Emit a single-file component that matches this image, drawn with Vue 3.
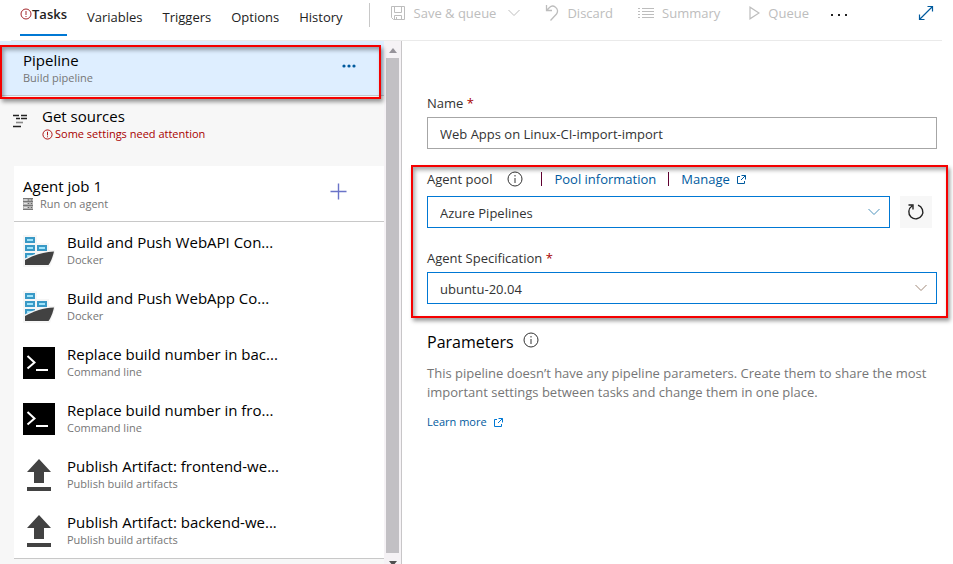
<script setup>
import { ref } from 'vue'

const tabs = ['Variables', 'Triggers', 'Options', 'History']
const tasks = [
  { icon: 'docker', title: 'Build and Push WebAPI Con...', kind: 'Docker' },
  { icon: 'docker', title: 'Build and Push WebApp Co...', kind: 'Docker' },
  { icon: 'cmd', title: 'Replace build number in bac...', kind: 'Command line' },
  { icon: 'cmd', title: 'Replace build number in fro...', kind: 'Command line' },
  { icon: 'publish', title: 'Publish Artifact: frontend-we...', kind: 'Publish build artifacts' },
  { icon: 'publish', title: 'Publish Artifact: backend-we...', kind: 'Publish build artifacts' },
]
const name = ref('Web Apps on Linux-CI-import-import')
const pool = ref('Azure Pipelines')
const spec = ref('ubuntu-20.04')
</script>

<template>
  <div class="page">
    <header class="topbar">
      <nav class="tabs">
        <a href="#" class="tab active">
          <svg width="12" height="12" viewBox="0 0 12 12" fill="none" stroke="#a4262c"><circle cx="6" cy="6" r="5" /><path d="M6 3v4M6 8v1" /></svg>
          <span>Tasks</span>
        </a>
        <a v-for="t in tabs" :key="t" href="#" class="tab">{{ t }}</a>
      </nav>
      <div class="toolbar">
        <button class="tool save" disabled>
          <svg width="16" height="16" viewBox="0 0 16 16" fill="none" stroke="currentColor"><path d="M1.500 1.500h13v13h-11l-2-2zM4.500 1.500v6h7v-6M4.500 14.500v-4h7v4M6.500 12v2" /></svg>
          <span>Save &amp; queue</span>
          <svg class="chevron" width="12" height="8" viewBox="0 0 12 8" fill="none" stroke="currentColor"><path d="M.5 1l5.500 5.500L11.500 1" /></svg>
        </button>
        <button class="tool" disabled>
          <svg width="14" height="16" viewBox="0 0 14 16" fill="none" stroke="currentColor" stroke-width="1.300"><path d="M1.500 0v5.500H7M1.500 5.500L4.500 2.500C6 1 8.500.7 10.500 2.200C13 4 13 7 11.500 9L5.500 15.500" /></svg>
          <span>Discard</span>
        </button>
        <button class="tool" disabled>
          <svg width="16" height="12" viewBox="0 0 16 12" fill="none" stroke="currentColor"><path d="M0 1.500h2M4 1.500h12M0 4.500h2M4 4.500h12M0 7.500h2M4 7.500h12M0 10.500h2M4 10.500h12" /></svg>
          <span>Summary</span>
        </button>
        <button class="tool queue" disabled>
          <svg width="11" height="14" viewBox="0 0 11 14" fill="none" stroke="currentColor" stroke-width="1.200"><path d="M1 1.200v11.600L10 7z" /></svg>
          <span>Queue</span>
        </button>
        <button class="icon-btn more" aria-label="More actions">
          <svg width="18" height="4" viewBox="0 0 18 4" fill="#222"><path d="M1 1h2v2H1zM8 1h2v2H8zM15 1h2v2h-2z" /></svg>
        </button>
      </div>
      <button class="icon-btn expand" aria-label="Full screen">
        <svg width="16" height="16" viewBox="0 0 16 16" fill="none" stroke="#005a9e" stroke-width="1.200"><path d="M1.500 14.500l13-13M9.500 1.500h5v5M1.500 9.500v5h5" /></svg>
      </button>
    </header>

    <div class="body">
      <aside class="side">
        <div class="list">
          <div class="pipeline">
            <div>
              <div class="title">Pipeline</div>
              <div class="sub">Build pipeline</div>
            </div>
            <button class="icon-btn" aria-label="Pipeline options">
              <svg width="14" height="4" viewBox="0 0 14 4" fill="#005a9e"><circle cx="2" cy="2" r="1.600" /><circle cx="7" cy="2" r="1.600" /><circle cx="12" cy="2" r="1.600" /></svg>
            </button>
            <div class="marker"></div>
          </div>
          <div class="sources">
            <svg width="15" height="14" viewBox="0 0 15 14" fill="none" stroke="#222"><path d="M0 1.500h6M8 1.500h6M3 4.500h4M8 4.500h6M0 12.500h8" stroke-width="1.300" /><path d="M3 8.500h7" stroke="#888" stroke-width="1.600" /></svg>
            <div>
              <div class="title">Get sources</div>
              <div class="sub warn">
                <svg width="11" height="11" viewBox="0 0 12 12" fill="none" stroke="#a80000"><circle cx="6" cy="6" r="5" /><path d="M6 3v4M6 8v1" /></svg>
                Some settings need attention
              </div>
            </div>
          </div>
          <section class="job">
            <div class="job-head">
              <div>
                <div class="title">Agent job 1</div>
                <div class="sub agent">
                  <svg width="10" height="12" viewBox="0 0 10 12"><path d="M0 0h10v12H0z" fill="#b4b4b4" /><path d="M0 .5h10M0 3.500h10M0 7.500h10M0 11.500h10" stroke="#777" /><path d="M1 2h3M1 5.500h3M1 9.500h3" stroke="#e4e4e4" /><path d="M5 2h1M8 2h1M5 5.500h1M8 5.500h1M5 9.500h1M8 9.500h1" stroke="#666" /></svg>
                  Run on agent
                </div>
              </div>
              <button class="icon-btn add" aria-label="Add a task">
                <svg width="17" height="17" viewBox="0 0 17 17" fill="none" stroke="#6a73c8" stroke-width="1.400"><path d="M8.500 .5v16M.5 8.500h16" /></svg>
              </button>
            </div>
            <ul>
              <li v-for="t in tasks" :key="t.title" class="task">
                <svg v-if="t.icon === 'docker'" width="32" height="32" viewBox="0 0 32 32">
                  <path d="M0 0h14v8h12v7h6v3l-5 14H0z" fill="#f6f6f6" />
                  <g fill="#9fe4fb" stroke="#3999c6" stroke-width="2">
                    <rect x="3" y="3" width="8" height="4" />
                    <rect x="3" y="11" width="8" height="4" />
                    <rect x="15" y="11" width="8" height="4" />
                    <rect x="3" y="19" width="8" height="4" />
                  </g>
                  <path d="M1 24C10 19 20 16 32 15.500V18L27 31H1z" fill="#f6f6f6" />
                  <path d="M2 25C11 20 20 17 31 16.500C30 21 28 27 25.500 30H2z" fill="#424242" />
                </svg>
                <svg v-else-if="t.icon === 'cmd'" width="32" height="32" viewBox="0 0 32 32" fill="none" stroke="#fff" stroke-width="2">
                  <path d="M0 0h32v32H0z" fill="#000" stroke="none" /><path d="M4.500 9l7 6.500-7 6M13 23h12" />
                </svg>
                <svg v-else width="32" height="32" viewBox="0 0 32 32" fill="#424242">
                  <path d="M16 0l12 13h-7v11H11V13H4zM4 28h24v4H4z" />
                </svg>
                <div>
                  <div class="title">{{ t.title }}</div>
                  <div class="sub">{{ t.kind }}</div>
                </div>
              </li>
            </ul>
          </section>
        </div>
        <div class="scroll">
          <svg width="8" height="5" viewBox="0 0 8 5" fill="#96939a"><path d="M0 5l4-5 4 5z" /></svg>
          <div class="thumb"></div>
          <svg width="8" height="5" viewBox="0 0 8 5" fill="#505050"><path d="M0 0l4 5 4-5z" /></svg>
        </div>
      </aside>

      <main class="details">
        <div class="field">
          <label for="name">Name <b>*</b></label>
          <input id="name" v-model="name" type="text" />
        </div>
        <div class="group">
          <div class="pool-label">
            <label for="pool">Agent pool</label>
            <svg class="info" width="16" height="16" viewBox="0 0 16 16" fill="none" stroke="#333"><circle cx="8" cy="8" r="7" /><path d="M8 7v5M8 4v1.500" /></svg>
            <span class="links">
              <i class="bar"></i>
              <a href="#">Pool information</a>
              <i class="bar"></i>
              <a href="#" class="manage">Manage
                <svg width="9" height="9" viewBox="0 0 9 9" fill="none" stroke="currentColor"><path d="M3 1.500H.5v7h7V6M4.500.5h4v4M8.500.5L4 5" /></svg>
              </a>
            </span>
          </div>
          <div class="pool-row">
            <div class="select">
              <select id="pool" v-model="pool"><option>Azure Pipelines</option></select>
              <svg width="12" height="8" viewBox="0 0 12 8" fill="none" stroke="#4c93bd"><path d="M.5 1l5.500 5.500L11.500 1" /></svg>
            </div>
            <button class="refresh" aria-label="Refresh pools">
              <svg width="18" height="18" viewBox="0 0 18 18" fill="none" stroke="#222" stroke-width="1.400"><path d="M11 2.200A7 7 0 1 1 5 3M1.500 2H6v4.500" /></svg>
            </button>
          </div>
          <div class="field spec">
            <label for="spec">Agent Specification <b>*</b></label>
            <div class="select">
              <select id="spec" v-model="spec"><option>ubuntu-20.04</option></select>
              <svg width="12" height="8" viewBox="0 0 12 8" fill="none" stroke="#a08878"><path d="M.5 1l5.500 5.500L11.500 1" /></svg>
            </div>
          </div>
          <div class="marker"></div>
        </div>
        <h2>Parameters
          <svg width="16" height="16" viewBox="0 0 16 16" fill="none" stroke="#333"><circle cx="8" cy="8" r="7" /><path d="M8 7v5M8 4v1.500" /></svg>
        </h2>
        <p>This pipeline doesn’t have any pipeline parameters. Create them to share the most important settings between tasks and change them in one place.</p>
        <a href="#" class="learn">Learn more
          <svg width="9" height="9" viewBox="0 0 9 9" fill="none" stroke="#0078d4"><path d="M3 1.500H.5v7h7V6M4.500.5h4v4M8.500.5L4 5" /></svg>
        </a>
      </main>
    </div>
  </div>
</template>

<style>
body { margin: 0; }
</style>

<style scoped>
* { box-sizing: border-box; }
.page {
  height: 100vh;
  overflow: hidden;
  display: flex;
  flex-direction: column;
  background: #fff;
  color: #333;
  font: 13px/20px "Open Sans", "Noto Sans", sans-serif;
}
svg { display: block; flex: none; }
a { color: #005a9e; text-decoration: none; }
button { font: inherit; border: 0; padding: 0; background: none; color: inherit; }
.topbar {
  position: relative;
  display: flex;
  align-items: flex-start;
  height: 41px;
  flex: none;
  padding: 0 19px 0 20px;
}
.topbar::after {
  content: "";
  position: absolute;
  left: 11px;
  right: 11px;
  bottom: 0;
  height: 1px;
  background: #eaeaea;
}
.tabs { display: flex; gap: 20px; padding-right: 26px; }
.tab { color: #222; padding-top: 7px; }
.tab.active {
  display: flex;
  align-items: center;
  height: 36px;
  padding: 0 0 6px;
  border-bottom: 2px solid #0078d4;
  font-weight: 600;
}
.toolbar {
  display: flex;
  align-items: center;
  gap: 25px;
  height: 24px;
  margin-top: 3px;
  padding: 0 0 4px 20px;
  border-left: 1px solid #c8c8c8;
}
.tool { display: flex; align-items: center; gap: 8px; height: 20px; color: #bdbdbd; }
.chevron { margin: 0 0 0 4px; }
.queue { margin-left: 4px; }
.more { margin-left: -4px; padding-top: 4px; }
.icon-btn { display: flex; align-items: center; }
.expand { margin: 5px 0 0 auto; }
.body { flex: 1; display: flex; min-height: 0; }
.side {
  flex: none;
  display: flex;
  width: 402px;
  background: #f7f7f7;
  border-right: 1px solid #c8c6c8;
}
.list { flex: 1; min-width: 0; }
.title { color: #000; font-size: 15px; line-height: 18px; white-space: nowrap; }
.sub { margin-top: 2px; color: #767676; font-size: 11px; line-height: 14px; white-space: nowrap; }
.pipeline {
  position: relative;
  display: flex;
  justify-content: space-between;
  align-items: center;
  height: 55px;
  padding: 0 28px 0 23px;
  background: #deeeff;
  border-bottom: 1px solid #c4c8d0;
}
.pipeline .icon-btn { padding-bottom: 4px; }
.marker {
  position: absolute;
  inset: 4px 3px -4px 0;
  border: 2px solid #f50000;
  box-shadow: 2px 3px 4px rgba(0, 0, 0, .4), inset 2px 3px 4px rgba(0, 0, 0, .35);
  pointer-events: none;
}
.sources { display: flex; gap: 14px; padding: 11px 0 25px 13px; }
.sources > svg { margin-top: 7px; }
.sub.warn { display: flex; align-items: center; gap: 2px; color: #a80000; }
.job { margin: 0 0 0 14px; background: #fff; border-bottom: 1px solid #c8c8c8; }
.job-head {
  display: flex;
  justify-content: space-between;
  align-items: center;
  height: 56px;
  padding: 0 37px 0 9px;
  border-bottom: 1px solid #c8c8c8;
}
.add { padding-bottom: 4px; }
.agent { display: flex; align-items: center; gap: 7px; }
ul { list-style: none; margin: 0; padding: 0; }
.task { display: flex; gap: 12px; height: 56px; padding: 11px 0 0 9px; }
.task > svg { margin-top: 2px; }
.scroll {
  flex: none;
  display: flex;
  flex-direction: column;
  align-items: center;
  gap: 5px;
  width: 17px;
  padding: 7px 0 0;
  margin-bottom: -2px;
  background: #f5f2f5;
}
.thumb { flex: 1; width: 13px; margin-bottom: 3px; background: #c2c0c4; }
.details { flex: 1; min-width: 0; padding: 52px 16px 0 25px; }
.field { display: flex; flex-direction: column; gap: 4px; }
b { color: #a80000; font-weight: 400; }
input, select {
  width: 100%;
  height: 32px;
  padding: 2px 12px 0;
  border: 1px solid #a6a6a6;
  border-radius: 0;
  background: #fff;
  color: #333;
  font: inherit;
  appearance: none;
}
.select { position: relative; flex: 1; }
select { display: block; border-color: #0078d4; }
.select svg { position: absolute; right: 10px; top: 12px; pointer-events: none; }
.group { position: relative; margin-top: 20px; }
.group .marker { inset: -4px -11px -14px -16px; }
.pool-label { display: flex; align-items: center; height: 20px; margin-bottom: 7px; }
.info { margin: 0 18px 0 15px; }
.links { display: flex; align-items: center; gap: 12px; }
.bar { width: 1px; height: 14px; background: #600030; }
.manage, .learn { display: flex; align-items: center; gap: 7px; }
.pool-row { display: flex; gap: 10px; padding-right: 5px; }
.refresh {
  display: flex;
  align-items: center;
  justify-content: center;
  width: 32px;
  height: 32px;
  background: #f7f7f7;
}
.spec { margin-top: 20px; }
h2 {
  display: flex;
  gap: 9px;
  margin: 28px 0 12px;
  color: #000;
  font-size: 16px;
  font-weight: 400;
  line-height: 20px;
}
p { margin: 0 0 11px; color: #767676; line-height: 19px; }
.learn { font-size: 11px; line-height: 18px; }
</style>
